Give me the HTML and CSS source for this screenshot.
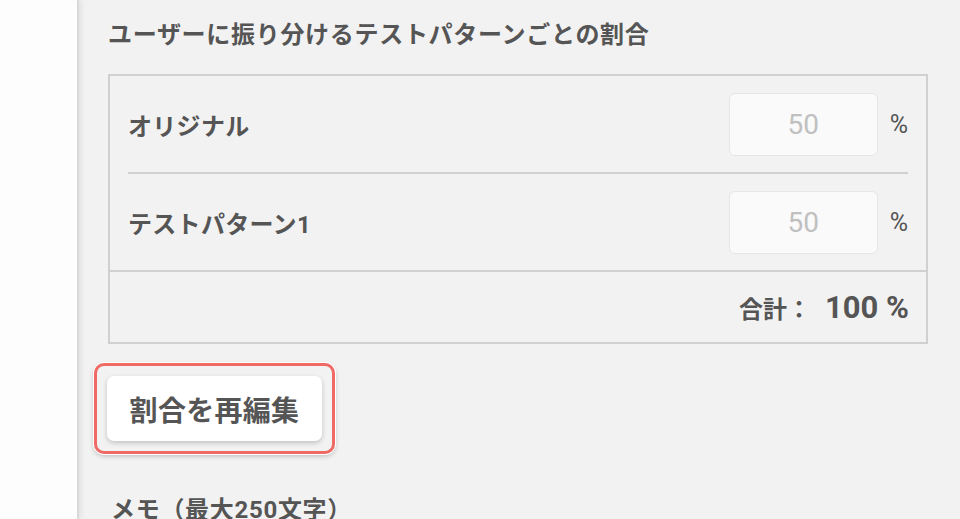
FILE: index.html
```html
<!DOCTYPE html>
<html lang="ja">
<head>
<meta charset="UTF-8">
<meta name="viewport" content="width=device-width, initial-scale=1.0">
<title>テストパターンの割合</title>
<link rel="stylesheet" href="styles.css">
</head>
<body>
<div class="layout">
<aside class="sidebar"></aside>
<main class="main">
<h2 class="section-title">ユーザーに振り分けるテストパターンごとの割合</h2>
<div class="ratio-box">
<div class="ratio-row">
<span class="ratio-name">オリジナル</span>
<input class="ratio-input" type="text" value="50" disabled>
<span class="ratio-unit">%</span>
</div>
<div class="ratio-row">
<span class="ratio-name">テストパターン1</span>
<input class="ratio-input" type="text" value="50" disabled>
<span class="ratio-unit">%</span>
</div>
<div class="ratio-total">
<span class="total-label">合計：</span>
<span class="total-value">100 %</span>
</div>
</div>
<div class="highlight">
<button type="button" class="edit-btn">割合を再編集</button>
</div>
<h2 class="section-title memo-title">メモ（最大250文字）</h2>
</main>
</div>
</body>
</html>
```

FILE: styles.css
```css
body {
font-family: Roboto, "Noto Sans CJK JP", sans-serif;
margin: 0;
padding: 0;
background-color: #f2f2f2;
color: #555;
overflow: hidden;
}
.layout {
display: flex;
height: 519px;
}
.sidebar {
width: 77px;
flex-shrink: 0;
background-color: #fdfdfd;
border-right: 2px solid #d9d9d9;
box-shadow: 2px 0 6px rgba(0, 0, 0, 0.08);
}
.main {
flex: 1;
padding: 17px 29px 0 29px;
}
.section-title {
font-size: 24px;
font-weight: bold;
line-height: 36px;
letter-spacing: 0.7px;
margin: 0;
}
.ratio-box {
margin-top: 21px;
width: 816px;
border: 2px solid #d0d0d0;
}
.ratio-row {
display: flex;
align-items: center;
height: 96px;
margin: 0 18px;
border-bottom: 2px solid #d0d0d0;
}
.ratio-row + .ratio-row {
border-bottom: none;
}
.ratio-name {
flex: 1;
font-size: 24px;
font-weight: bold;
letter-spacing: 0.3px;
}
.ratio-input {
width: 149px;
height: 63px;
box-sizing: border-box;
border: 1px solid #e6e6e6;
border-radius: 6px;
background-color: #fafafa;
font-family: Roboto, sans-serif;
font-size: 28px;
color: #c0c0c0;
text-align: center;
padding: 0;
}
.ratio-unit {
margin-left: 12px;
font-size: 25px;
}
.ratio-total {
display: flex;
justify-content: flex-end;
align-items: center;
height: 70px;
padding-right: 17px;
border-top: 2px solid #d0d0d0;
}
.total-label {
font-size: 24px;
font-weight: bold;
}
.total-value {
margin-left: 14px;
font-size: 31px;
font-weight: bold;
}
.highlight {
display: inline-block;
margin-top: 19px;
margin-left: -14px;
padding: 10px;
border: 3px solid #ef6a64;
border-radius: 10px;
box-shadow: 0 0 0 1px #fff, 0 2px 5px rgba(0, 0, 0, 0.25);
}
.edit-btn {
display: block;
width: 215px;
height: 65px;
border: none;
border-radius: 7px;
background-color: #fff;
box-shadow: 0 2px 5px rgba(0, 0, 0, 0.2);
font-family: Roboto, "Noto Sans CJK JP", sans-serif;
font-size: 28px;
font-weight: bold;
letter-spacing: 0.3px;
color: #555;
cursor: pointer;
}
.memo-title {
margin-top: 38px;
padding-left: 3px;
}
```
